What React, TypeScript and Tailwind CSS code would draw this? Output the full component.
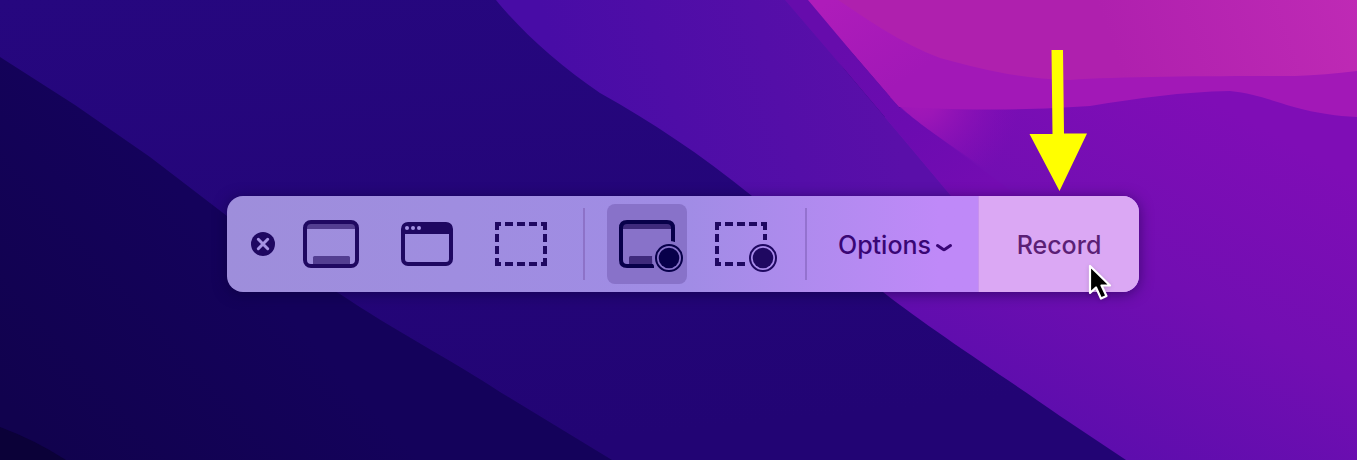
import type { ReactNode } from "react";

function Wallpaper() {
  return (
    <svg
      className="absolute inset-0 h-full w-full"
      viewBox="0 0 1357 460"
      preserveAspectRatio="xMidYMid slice"
      aria-hidden="true"
    >
      <defs>
        <linearGradient id="indigo" x1="0" y1="0" x2="0.3" y2="1">
          <stop offset="0" stopColor="#26077f" />
          <stop offset="1" stopColor="#220474" />
        </linearGradient>
        <linearGradient id="night" gradientUnits="userSpaceOnUse" x1="40" y1="440" x2="240" y2="260">
          <stop offset="0" stopColor="#11024e" />
          <stop offset="1" stopColor="#14025b" />
        </linearGradient>
        <linearGradient id="violet" gradientUnits="userSpaceOnUse" x1="560" y1="80" x2="860" y2="0">
          <stop offset="0" stopColor="#480ca6" />
          <stop offset="1" stopColor="#5a0fa9" />
        </linearGradient>
        <linearGradient id="purple" gradientUnits="userSpaceOnUse" x1="1230" y1="110" x2="1060" y2="430">
          <stop offset="0" stopColor="#7f0db6" />
          <stop offset="0.5" stopColor="#720eb2" />
          <stop offset="1" stopColor="#5d0dad" />
        </linearGradient>
        <linearGradient id="ridge" gradientUnits="userSpaceOnUse" x1="840" y1="40" x2="990" y2="190">
          <stop offset="0" stopColor="#660cac" />
          <stop offset="0.5" stopColor="#6b0bb0" />
          <stop offset="1" stopColor="#740cb2" />
        </linearGradient>
        <radialGradient id="glow" gradientUnits="userSpaceOnUse" cx="920" cy="98" r="100">
          <stop offset="0" stopColor="#a418b7" />
          <stop offset="0.2" stopColor="#9c16b7" />
          <stop offset="1" stopColor="#850db6" stopOpacity="0" />
        </radialGradient>
        <linearGradient id="magenta" gradientUnits="userSpaceOnUse" x1="830" y1="0" x2="890" y2="90">
          <stop offset="0" stopColor="#ae1cba" />
          <stop offset="1" stopColor="#a218b7" />
        </linearGradient>
        <linearGradient id="pink" gradientUnits="userSpaceOnUse" x1="1120" y1="70" x2="1357" y2="-10">
          <stop offset="0" stopColor="#af20ae" />
          <stop offset="1" stopColor="#bf2ab5" />
        </linearGradient>
      </defs>
      <rect width="1357" height="460" fill="url(#indigo)" />
      <path d="M0 57 L75 105 L150 157 L227 216 C275 253 310 277 340 294 C390 328 455 362 500 392 L612 460 H0Z" fill="url(#night)" />
      <path d="M0 427 Q35 440 66 460 H0Z" fill="#0b0138" />
      <path d="M752 196 L883 292 C930 329 1000 374 1060 416 L1126 460 H1357 V0 H808 L850 50 L900 108Z" fill="url(#purple)" />
      <path d="M496 0 C520 30 560 66 600 93 C652 122 700 154 752 196 L951 196 L900 135 L845 70 L792 0Z" fill="url(#violet)" />
      <path d="M785 0 L845 70 L900 135 L953 198 H1025 L1010 190 L940 138 L900 108 L850 50 L810 0Z" fill="url(#ridge)" />
      <path d="M890 97 C920 127 945 140 1018 192 H1100 V80Z" fill="url(#glow)" />
      <path d="M808 0 L850 50 L899 107 L925 108 C995 111 1045 109 1090 106 C1140 98 1180 92 1230 91 C1272 95 1290 113 1357 117 V0Z" fill="url(#magenta)" />
      <path d="M838 0 C867 19 900 43 940 58 C980 69 1020 79 1070 80 C1120 76 1240 76 1295 76 Q1325 75 1357 71 V0Z" fill="url(#pink)" />
    </svg>
  );
}

function ToolButton({ label, active = false, children }: { label: string; active?: boolean; children: ReactNode }) {
  return (
    <button
      type="button"
      aria-label={label}
      aria-pressed={active}
      className={active ? "size-20 rounded-lg bg-[#8872c9] text-[#08004a]" : "size-20 rounded-lg text-[#1f0861]"}
    >
      <svg viewBox="0 0 80 80" className="size-20" fill="none" aria-hidden="true">
        {children}
      </svg>
    </button>
  );
}

function RecordDot() {
  return (
    <>
      <circle cx="62" cy="54" r="13" stroke="currentColor" strokeWidth="2" />
      <circle cx="62" cy="54" r="10.300" fill="currentColor" />
    </>
  );
}

export default function App() {
  return (
    <main className="relative flex min-h-screen items-center justify-center overflow-hidden bg-[#22057a] pt-7 pl-[9px] font-['Inter','Liberation_Sans',sans-serif]">
      <Wallpaper />
      <div
        role="toolbar"
        aria-label="Screen capture"
        className="relative flex h-24 shrink-0 items-center rounded-2xl bg-linear-to-r from-[#9e8edb] from-0% via-[#a08ce5] via-50% to-[#bf89f8] to-78% pl-6 shadow-[0_2px_14px_rgba(10,0,50,0.5)]"
      >
        <button type="button" aria-label="Close" className="mr-4 size-6 text-[#1f0861]">
          <svg viewBox="0 0 24 24" className="size-6" aria-hidden="true">
            <circle cx="12" cy="12" r="12" fill="currentColor" />
            <path d="M7.300 7.300 16.700 16.700M16.700 7.300 7.300 16.700" stroke="#a593e3" strokeWidth="3" strokeLinecap="round" />
          </svg>
        </button>

        <div className="flex gap-[15px]">
          <ToolButton label="Capture entire screen">
            <path d="M16 20H64V25H16Z" fill="#533e91" />
            <path d="M22 61V53.500Q22 52 23.500 52H57.500Q59 52 59 53.500V61Z" fill="#533e91" />
            <rect x="14" y="18" width="52" height="44" rx="6" stroke="currentColor" strokeWidth="4" />
          </ToolButton>
          <ToolButton label="Capture selected window">
            <rect x="17" y="20" width="48" height="40" rx="5" stroke="currentColor" strokeWidth="4" />
            <path d="M16 30V23Q16 19 21 19H61Q66 19 66 23V30Z" fill="currentColor" />
            <circle cx="21" cy="24" r="2" fill="#a593e3" />
            <circle cx="27" cy="24" r="2" fill="#a593e3" />
            <circle cx="33" cy="24" r="2" fill="#a593e3" />
          </ToolButton>
          <ToolButton label="Capture selected portion">
            <path
              d="M14 20H20M24 20H32M36 20H44M48 20H56M60 20H66M14 60H20M24 60H32M36 60H44M48 60H56M60 60H66M16 18V26M16 30V38M16 42V50M16 54V62M64 18V26M64 30V38M64 42V50M64 54V62"
              stroke="currentColor"
              strokeWidth="4"
            />
          </ToolButton>
        </div>

        <div className="mx-[22px] h-[72px] w-0.5 bg-[#8d72c8]" />

        <div className="flex gap-[14px]">
          <ToolButton label="Record entire screen" active>
            <path d="M16 20H64V25H16Z" fill="#3f2a7c" />
            <path d="M22 61V53.500Q22 52 23.500 52H46L45 61Z" fill="#3f2a7c" />
            <path d="M66 38.500V24Q66 18 60 18H20Q14 18 14 24V56Q14 62 20 62H47" stroke="currentColor" strokeWidth="4" />
            <circle cx="62" cy="54" r="17" fill="#8872c9" />
            <RecordDot />
          </ToolButton>
          <ToolButton label="Record selected portion">
            <path
              d="M14 20H20M24 20H32M36 20H44M48 20H56M60 20H66M14 60H20M24 60H32M36 60H44M16 18V26M16 30V38M16 42V50M16 54V62M64 18V26M64 30V36"
              stroke="currentColor"
              strokeWidth="4"
            />
            <RecordDot />
          </ToolButton>
        </div>

        <div className="ml-6 h-[72px] w-0.5 bg-[#9472cf]" />

        <button type="button" aria-haspopup="menu" className="flex h-24 w-[171px] items-center justify-center gap-1 pt-1 pl-1.5 text-[25px] font-medium text-[#390675]">
          Options
          <svg viewBox="0 0 18 12" className="mt-1 h-3 w-[18px]" fill="none" aria-hidden="true">
            <path d="M2.500 3.500 L8 7.300Q9 8 10 7.300L15.500 3.500" stroke="currentColor" strokeWidth="3" strokeLinecap="round" />
          </svg>
        </button>

        <div className="relative">
          <button type="button" className="h-24 w-[161px] rounded-r-2xl border-l border-[#c791ee] bg-[#dba8f4] pt-1 text-[25px] font-medium text-[#5b1f76]">
            Record
          </button>
          <svg viewBox="0 0 58 142" className="pointer-events-none absolute bottom-[101px] left-[51px] h-[142px] w-[58px]" aria-hidden="true">
            <path d="M22.500 1H34L35 84.500H58L30.500 142 .500 85H23.500Z" fill="#ffff00" />
          </svg>
          <svg viewBox="0 0 26 38" className="pointer-events-none absolute top-[68px] left-[110px] h-[38px] w-[26px] drop-shadow-sm" aria-hidden="true">
            <path d="M2 2V29L8 23.500L13 34.500L18.500 32L13.500 21.500H22Z" fill="#000" stroke="#fff" strokeWidth="2.200" strokeLinejoin="round" />
          </svg>
        </div>
      </div>
    </main>
  );
}
